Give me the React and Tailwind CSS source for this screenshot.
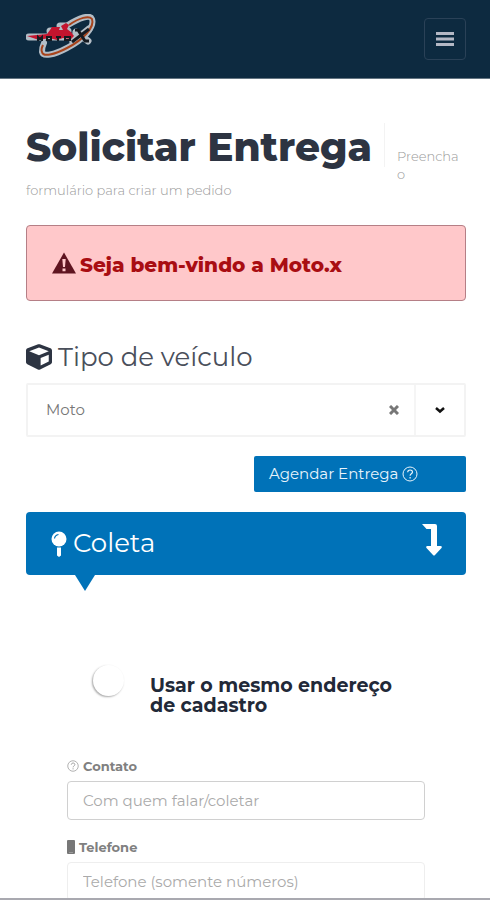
import { useState } from "react";
import { FaCube } from "react-icons/fa";

function Logo() {
  return (
    <svg viewBox="0 0 72 50" className="w-18 h-12.5" role="img" aria-label="Moto.x">
      <g fill="none" strokeLinecap="round" strokeLinejoin="round" stroke="#b3bdc6">
        <path d="M42 11C53 4 64 0 66 5c3 8-9 21-25 29-13 7-24 9-25 4 0-3 0-5 2-9" strokeWidth="6" />
        <path d="M3 23h45M24 17h18M34 12h6M50 18l12 9M63 15L47 28" strokeWidth="7" />
      </g>
      <path d="M43 11C53 4 63 1 66 5c3 8-9 21-25 29-13 7-24 9-25 4-1-2 0-5 1-7" stroke="#a8431b" strokeWidth="2" fill="none" />
      <path d="M1 22l20-2 3-4 2-3h8l-1 3h4l-2-4 5-3 3 2-2 4 4 3 3 4-3 3-8-1-6 2-8-2-10 2z" fill="#c4142e" />
      <g stroke="#151a21" strokeWidth="2" fill="none">
        <path d="M12 27v-4l2 2 2-2v4M21 23h4v3h-4zM30 23h5M32 23v4M39 23h5v3h-5z" />
        <path d="M49 16h3l7 11h4M63 15L46 28" strokeWidth="3" />
      </g>
    </svg>
  );
}

function QuestionIcon({ className }) {
  return (
    <svg viewBox="0 0 16 16" className={className} fill="none" stroke="currentColor" aria-hidden="true">
      <circle cx="8" cy="8" r="7" />
      <path d="M5.7 6.3c0-3 4.8-3 4.8-.2 0 1.8-2.4 1.7-2.4 3.7M8.1 11v1.5" strokeWidth="1.2" />
    </svg>
  );
}

function WarningIcon() {
  return (
    <svg viewBox="0 0 24 22" className="w-6 h-[22px]" aria-hidden="true">
      <path d="M12 0.5l12 21H0z" fill="#5f1420" />
      <path d="M10.3 7h3.4l-.7 8h-2zM10.5 16.5h3v2.7h-3z" fill="#ffc8ca" />
    </svg>
  );
}

function PinIcon() {
  return (
    <svg viewBox="0 0 16 26" className="w-4 h-[26px]" aria-hidden="true">
      <circle cx="8" cy="8" r="7.5" fill="#fff" />
      <path d="M6 16.5h4v8l-2 1.5-2-1.5z" fill="#fff" />
      <path d="M3.5 7.5c.3-2.2 1.8-3.6 4-4" fill="none" stroke="#0072b8" strokeWidth="1.2" />
    </svg>
  );
}

function DownArrowIcon() {
  return (
    <svg viewBox="0 0 20 32" className="w-5 h-8" fill="currentColor" aria-hidden="true">
      <path d="M0 0h13q2 0 2 2v20h3.5q2 0 1 2l-6.500 7q-1 1-2 0l-6.500-7q-1-2 1-2H9V5H4.500z" />
    </svg>
  );
}

function PhoneIcon() {
  return (
    <svg viewBox="0 0 8 14" className="w-2 h-3.5" aria-hidden="true">
      <rect width="8" height="14" rx="1" fill="#777" />
      <path d="M2 12.5h4" stroke="#999" />
    </svg>
  );
}

export default function App() {
  const [vehicle, setVehicle] = useState("moto");
  const [sameAddress, setSameAddress] = useState(false);

  return (
    <div className="h-screen flex flex-col bg-white text-[#2d3442] font-['Montserrat','Inter',sans-serif]">

      {/* Header */}
      <header className="shrink-0 h-[79px] pl-[26px] pr-6 flex items-center justify-between bg-[#0d2a40] border-b border-[#647582]">
        <a href="#inicio"><Logo /></a>
        <button type="button" aria-label="Menu"
          className="w-[42px] h-[42px] flex items-center justify-center rounded-sm border border-[#2a4157]">
          <svg viewBox="0 0 18 14" className="w-[18px] h-3.5" fill="#b4b8c5">
            <path d="M0 0h18v3H0zM0 5.5h18v3H0zM0 11h18v3H0z" />
          </svg>
        </button>
      </header>

      <main className="flex-1 min-h-0 overflow-y-auto [scrollbar-width:none] border-b-2 border-[#a9a9b0] pl-[26px] pr-6 pt-11">

        {/* Title */}
        <div className="flex items-start">
          <h1 className="text-[39px] leading-12 font-extrabold whitespace-nowrap">Solicitar Entrega</h1>
          <p className="ml-3 pl-3 w-20 h-11 pt-6 border-l border-[#f3f3f3] text-[13px] leading-[18px] font-light text-[#999]">
            Preencha o
          </p>
        </div>
        <p className="mt-2.5 text-[13px] leading-[18px] font-light text-[#999]">formulário para criar um pedido</p>

        <div role="alert"
          className="mt-[26px] h-[76px] px-[25px] flex items-center gap-1 rounded-sm border border-[#b57f86] bg-[#ffc8ca]">
          <WarningIcon />
          <strong className="pt-1 text-xl font-extrabold text-[#a90d12]">Seja bem-vindo a Moto.x</strong>
        </div>

        {/* Vehicle */}
        <label htmlFor="vehicle" className="mt-9 flex items-center gap-1.5 text-[26px] leading-10">
          <FaCube className="w-[26px] h-[26px]" />
          <span className="text-[#4a4f5b]">Tipo de veículo</span>
        </label>
        <div className="mt-1.5 h-[54px] flex items-stretch border-2 border-[#f3f3f3] rounded-xs">
          <select id="vehicle" value={vehicle} onChange={(e) => setVehicle(e.target.value)}
            className="flex-1 appearance-none pl-[18px] text-[15px] text-[#777] outline-none">
            <option value="">Selecione</option>
            <option value="moto">Moto</option>
            <option value="carro">Carro</option>
          </select>
          <button type="button" aria-label="Limpar" onClick={() => setVehicle("")} className="w-10 flex items-center justify-center">
            <svg viewBox="0 0 10 10" className="w-2.5 h-2.5" stroke="#777" strokeWidth="3">
              <path d="M1 1l8 8M9 1l-8 8" />
            </svg>
          </button>
          <button type="button" aria-label="Abrir lista"
            className="w-[50px] flex items-center justify-center border-l-2 border-[#f5f5f5]">
            <svg viewBox="0 0 10 7" className="w-2.5 h-2" fill="none" stroke="#111" strokeWidth="2.5">
              <path d="M1 1.5l4 3.5 4-3.5" />
            </svg>
          </button>
        </div>

        <button type="button"
          className="mt-[19px] ml-auto w-[212px] h-9 px-[15px] flex items-center gap-1 rounded-xs bg-[#0072b8] text-[#e8f4fb] text-[15px]">
          Agendar Entrega
          <QuestionIcon className="w-4 h-4" />
        </button>

        {/* Pickup */}
        <div className="relative mt-5 h-[63px] pl-[25px] pr-6 flex items-center justify-between rounded-sm bg-[#0072b8] text-white">
          <h2 className="flex items-center gap-1.5 text-[26px]">
            <PinIcon />
            Coleta
          </h2>
          <div className="pb-2"><DownArrowIcon /></div>
          <span className="absolute left-[49px] top-full border-x-[10px] border-t-[16px] border-x-transparent border-t-[#0072b8]" />
        </div>

        <form className="px-[41px] pb-8">
          <label className="mt-[90px] px-[26px] flex items-start gap-[26px]">
            <input type="checkbox" checked={sameAddress} onChange={(e) => setSameAddress(e.target.checked)}
              className="appearance-none shrink-0 w-[31px] h-[31px] rounded-full bg-white shadow-[-1px_1px_2px_rgba(0,0,0,0.35)] checked:bg-[#0072b8]" />
            <span className="pt-[11px] text-[19px] leading-5 font-bold text-[#222938]">Usar o mesmo endereço de cadastro</span>
          </label>

          <label htmlFor="contact" className="mt-[41px] flex items-center gap-1 text-[13px] leading-[18px] font-bold text-[#808080]">
            <QuestionIcon className="w-3 h-3 text-[#999]" />
            Contato
          </label>
          <input id="contact" type="text" placeholder="Com quem falar/coletar"
            className="mt-1.5 w-full h-[39px] px-[15px] rounded-sm border border-[#d0d0d0] text-[15px] outline-none placeholder:text-[#aaa]" />

          <label htmlFor="phone" className="mt-[18px] flex items-center gap-1 text-[13px] leading-[18px] font-bold text-[#808080]">
            <PhoneIcon />
            Telefone
          </label>
          <input id="phone" type="tel" placeholder="Telefone (somente números)"
            className="mt-1.5 w-full h-[39px] px-[15px] rounded-sm border border-[#eee] text-[15px] outline-none placeholder:text-[#aaa]" />
        </form>
      </main>
    </div>
  );
}
